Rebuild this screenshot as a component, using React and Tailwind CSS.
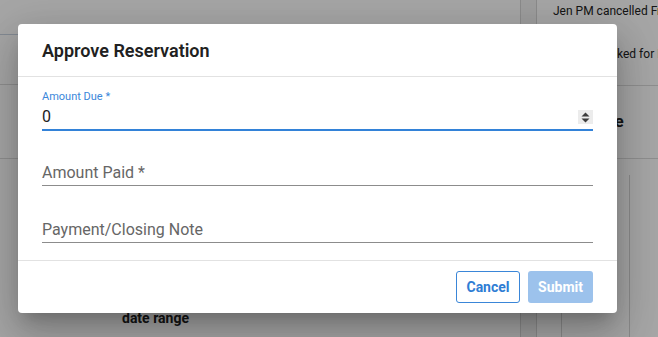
import React from "react";

const Background = () => {
    return (
        <div className="flex h-full w-full text-[#222]">
            <div className="flex w-[520px] shrink-0 flex-col">
                <div className="h-[35px] shrink-0 border-b border-[#c9d4e2]" />
                <div className="h-[50px] shrink-0 border-b border-[#dcdcdc]" />
                <div className="h-[74px] shrink-0 border-b border-[#dcdcdc]" />
                <div className="pl-[122px] pt-[149px]">
                    <p className="text-[14px] leading-5 font-bold">date range</p>
                </div>
            </div>
            <div className="w-[17px] shrink-0 border-x border-[#d6d6d6] bg-[#f3f3f3]" />
            <div className="flex min-w-0 flex-1 flex-col overflow-hidden">
                <div className="h-[86px] shrink-0 border-b border-[#dcdcdc] px-4 pt-[3px] text-[12px] leading-4 whitespace-nowrap">
                    <p>Jen PM cancelled Friday</p>
                    <p className="mt-[27px]">Jen PM booked for Friday</p>
                </div>
                <div className="flex h-[73px] shrink-0 items-center border-b border-[#dcdcdc] px-4">
                    <p className="text-[17px] font-bold whitespace-nowrap">Schedule</p>
                </div>
                <div className="ml-6 mt-[16px] h-full w-[69px] border-x border-[#d6d6d6]" />
            </div>
        </div>
    );
};

const Spinner = () => (
    <div className="flex h-[14px] w-[15px] items-center justify-center bg-[#ececec]">
        <svg width="9" height="11" viewBox="0 0 9 11">
            <path d="M4.5 0.5 L8.5 4.5 L0.5 4.5 Z" fill="#3d3d3d" />
            <path d="M0.5 6.5 L8.5 6.5 L4.5 10.5 Z" fill="#3d3d3d" />
        </svg>
    </div>
);

const Dialog = () => {
    return (
        <div className="absolute left-[18px] top-[24px] w-[599px] rounded-[4px] bg-white shadow-[0_11px_15px_-7px_rgba(0,0,0,0.2),0_24px_38px_3px_rgba(0,0,0,0.14),0_9px_46px_8px_rgba(0,0,0,0.12)]">
            <div className="flex h-[53px] items-center border-b border-[#e2e2e2] px-6">
                <h2 className="text-[18px] font-semibold text-[#212121]">Approve Reservation</h2>
            </div>
            <div className="px-6 pb-[17px]">
                <div className="mt-[14px]">
                    <label className="block h-3 text-[11px] leading-3 text-[#3a87da]">Amount Due *</label>
                    <div className="flex h-[28px] items-center border-b-2 border-[#3382d8] pt-[4px] pb-[2px] leading-5">
                        <span className="flex-1 text-[16px] leading-5 text-[#222]">0</span>
                        <Spinner />
                    </div>
                </div>
                <div className="mt-[16px]">
                    <div className="h-3" />
                    <div className="h-[27px] border-b border-[#8c8c8c] pt-[4px] pb-[2px] text-[16px] leading-5 text-[#666]">
                        Amount Paid *
                    </div>
                </div>
                <div className="mt-[18px]">
                    <div className="h-3" />
                    <div className="h-[27px] border-b border-[#8c8c8c] pt-[4px] pb-[2px] text-[16px] leading-5 text-[#666]">
                        Payment/Closing Note
                    </div>
                </div>
            </div>
            <div className="flex h-[53px] items-center justify-end gap-2 border-t border-[#e2e2e2] px-6">
                <button className="h-[32px] w-[64px] rounded-[3px] border border-[#3a86d8] text-[14px] font-bold text-[#2f7dd4]">Cancel</button>
                <button className="h-[32px] w-[65px] rounded-[3px] bg-[#9cc2ec] text-[14px] font-bold text-white">Submit</button>
            </div>
        </div>
    );
};

export default function App() {
    return (
        <div className="relative h-[337px] w-[658px] overflow-hidden bg-white font-['Roboto',sans-serif]">
            <Background />
            <div className="absolute inset-0 bg-black/35" />
            <Dialog />
        </div>
    );
}
